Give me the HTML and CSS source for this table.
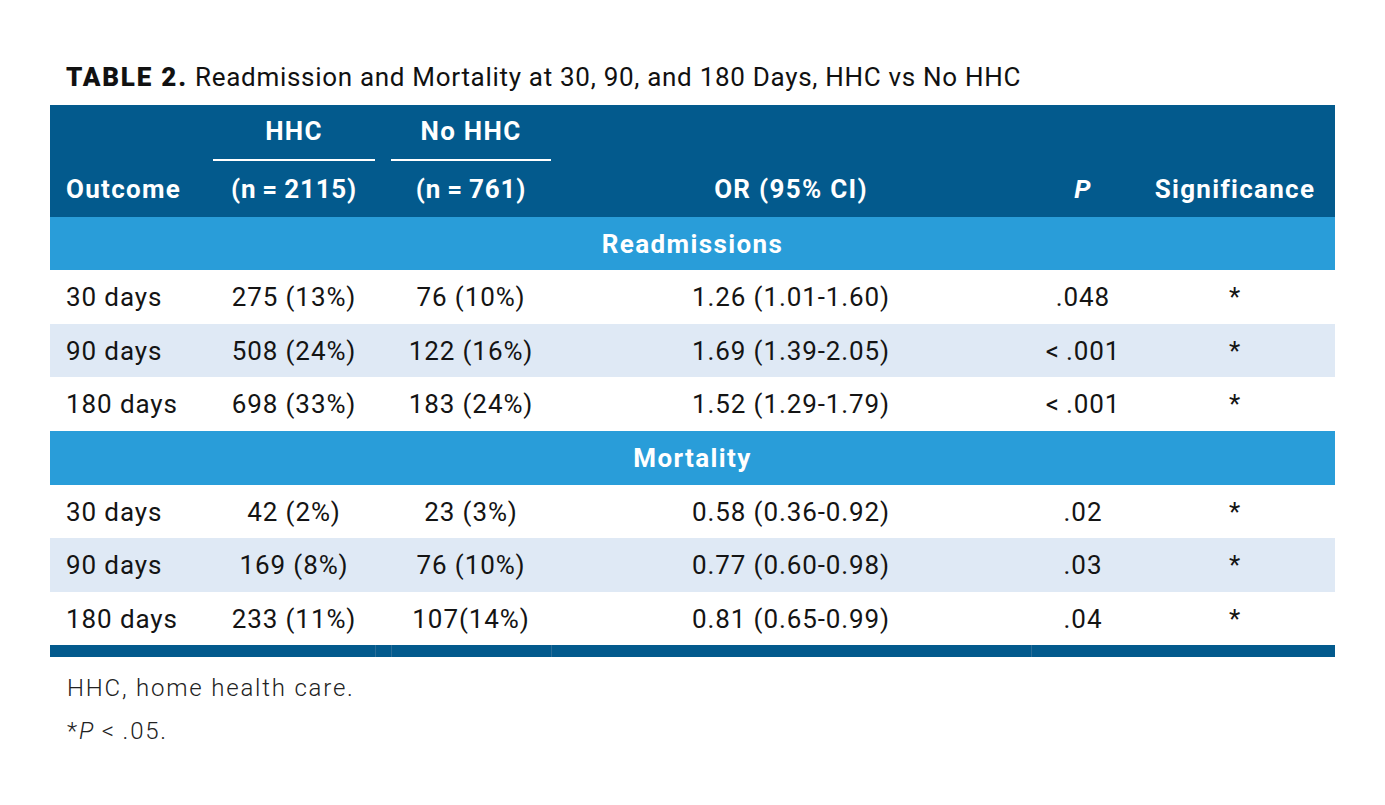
FILE: index.html
```html
<!DOCTYPE html>
<html lang="en">
<head>
<meta charset="utf-8">
<title>Table 2</title>
<link rel="stylesheet" href="styles.css">
</head>
<body>
<div class="page">
  <h1 class="caption"><span class="label">TABLE 2.</span> Readmission and Mortality at 30, 90, and 180 Days, HHC vs No HHC</h1>
  <table class="data">
    <colgroup>
      <col class="c-outcome">
      <col class="c-hhc">
      <col class="c-gap">
      <col class="c-nohhc">
      <col class="c-or">
      <col class="c-p">
      <col class="c-sig">
    </colgroup>
    <thead>
      <tr class="h1">
        <th class="left"></th>
        <th class="group">HHC</th>
        <th></th>
        <th class="group">No HHC</th>
        <th></th>
        <th></th>
        <th></th>
      </tr>
      <tr class="h2">
        <th class="left">Outcome</th>
        <th class="n">(n&#8201;=&#8201;2115)</th>
        <th></th>
        <th class="n">(n&#8201;=&#8201;761)</th>
        <th>OR (95% CI)</th>
        <th><i>P</i></th>
        <th>Significance</th>
      </tr>
    </thead>
    <tbody>
      <tr class="section"><td colspan="7">Readmissions</td></tr>
      <tr class="row tall">
        <td class="left">30 days</td><td>275 (13%)</td><td></td><td>76 (10%)</td><td>1.26 (1.01-1.60)</td><td>.048</td><td>*</td>
      </tr>
      <tr class="row alt">
        <td class="left">90 days</td><td>508 (24%)</td><td></td><td>122 (16%)</td><td>1.69 (1.39-2.05)</td><td>&lt;&#8201;.001</td><td>*</td>
      </tr>
      <tr class="row tall">
        <td class="left">180 days</td><td>698 (33%)</td><td></td><td>183 (24%)</td><td>1.52 (1.29-1.79)</td><td>&lt;&#8201;.001</td><td>*</td>
      </tr>
      <tr class="section tall"><td colspan="7">Mortality</td></tr>
      <tr class="row">
        <td class="left">30 days</td><td>42 (2%)</td><td></td><td>23 (3%)</td><td>0.58 (0.36-0.92)</td><td>.02</td><td>*</td>
      </tr>
      <tr class="row alt tall">
        <td class="left">90 days</td><td>169 (8%)</td><td></td><td>76 (10%)</td><td>0.77 (0.60-0.98)</td><td>.03</td><td>*</td>
      </tr>
      <tr class="row">
        <td class="left">180 days</td><td>233 (11%)</td><td></td><td>107(14%)</td><td>0.81 (0.65-0.99)</td><td>.04</td><td>*</td>
      </tr>
    </tbody>
    <tfoot>
      <tr class="bar">
        <td></td><td></td><td class="sep"></td><td class="sep"></td><td class="sep"></td><td class="sep"></td><td></td>
      </tr>
    </tfoot>
  </table>
  <div class="notes">
    <p>HHC, home health care.</p>
    <p>*<i>P</i>&#8201;&lt;&#8201;.05.</p>
  </div>
</div>
</body>
</html>
```

FILE: styles.css
```css
html, body {
  margin: 0;
  padding: 0;
  background: #ffffff;
}

body {
  font-family: Roboto, "Liberation Sans", sans-serif;
  color: #141414;
}

.page {
  padding: 62px 50px 0 50px;
}

.caption {
  margin: 0 0 12px 16px;
  font-size: 26px;
  line-height: 31px;
  font-weight: 400;
  color: #111111;
  letter-spacing: 0.7px;
}

.caption .label {
  font-weight: 900;
  letter-spacing: 1.8px;
}

.data {
  width: 1285px;
  border-collapse: collapse;
  table-layout: fixed;
}

.c-outcome { width: 163px; }
.c-hhc { width: 162px; }
.c-gap { width: 16px; }
.c-nohhc { width: 160px; }
.c-or { width: 480px; }
.c-p { width: 104px; }
.c-sig { width: 200px; }

.data th, .data td {
  padding: 0;
  text-align: center;
  vertical-align: middle;
}

.data thead th {
  background: #035a8d;
  color: #ffffff;
  font-size: 26px;
  font-weight: 700;
  letter-spacing: 1.3px;
}

.data thead th.n {
  letter-spacing: 0.8px;
}

.data .h1 th {
  height: 52px;
  padding-bottom: 2px;
}

.data .h1 th.group {
  border-bottom: 2px solid #ffffff;
}

.data .h2 th {
  height: 56px;
}

.data th.left, .data td.left {
  text-align: left;
  padding-left: 16px;
}

.data .section td {
  background: #299dd9;
  color: #ffffff;
  font-size: 26px;
  font-weight: 700;
  letter-spacing: 1.4px;
  height: 53px;
}

.data .row td {
  font-size: 26px;
  font-weight: 400;
  letter-spacing: 0.9px;
  height: 53px;
  color: #141414;
  background: #ffffff;
}

.data .tall td {
  height: 54px;
}

.data .row.alt td {
  background: #dfe9f5;
}

.data .bar td {
  background: #035a8d;
  height: 12px;
}

.data .bar td.sep {
  border-left: 1px solid #2a6d98;
}

.notes {
  padding: 10px 0 0 17px;
}

.notes p {
  margin: 0;
  font-size: 24px;
  font-weight: 300;
  letter-spacing: 1.8px;
  line-height: 43px;
  color: #222222;
}
```
